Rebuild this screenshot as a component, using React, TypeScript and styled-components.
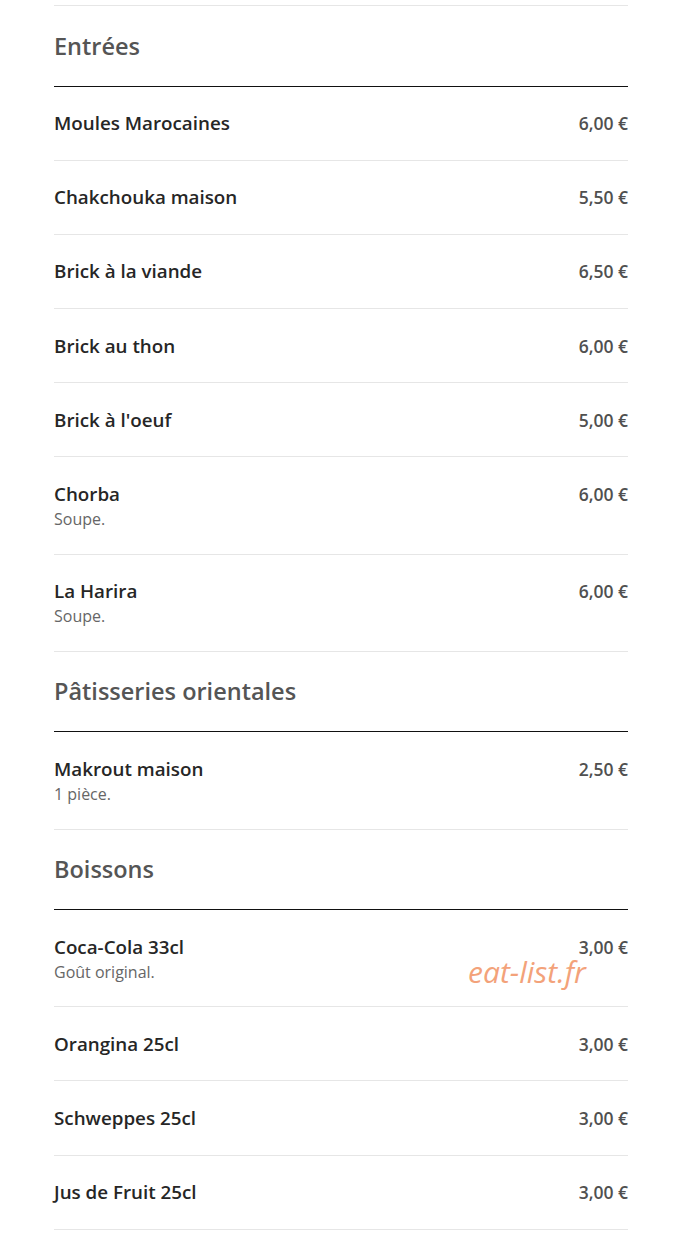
import React from "react";
import styled, { createGlobalStyle } from "styled-components";

const GlobalStyle = createGlobalStyle`
  html, body { margin: 0; padding: 0; background: #fff; }
  body { font-family: "Open Sans", "Liberation Sans", sans-serif; }
`;

const Page = styled.div`
  position: relative;
  padding: 5px 72px 15px 54px;
`;

const TopRule = styled.div`
  border-top: 1px solid #e6e6e6;
`;

const Section = styled.section``;

const Heading = styled.h2`
  margin: 0;
  padding: 24.5px 0 25px;
  font-size: 23.5px;
  line-height: 30px;
  font-weight: 600;
  color: #555;
  border-bottom: 1px solid #111;
`;

const Row = styled.div`
  display: flex;
  justify-content: space-between;
  align-items: flex-start;
  padding: 25.6px 0 25.6px;
  border-bottom: 1px solid #e6e6e6;
`;

const Info = styled.div`
  display: flex;
  flex-direction: column;
`;

const Name = styled.div`
  font-size: 18.8px;
  line-height: 22px;
  font-weight: 600;
  color: #262626;
`;

const Desc = styled.div`
  margin-top: 6px;
  font-size: 16px;
  line-height: 17px;
  color: #666;
`;

const Price = styled.div`
  font-size: 17.5px;
  line-height: 22px;
  font-weight: 600;
  color: #505050;
  white-space: nowrap;
`;

const Watermark = styled.div`
  position: absolute;
  left: 468px;
  top: 950px;
  font-size: 30px;
  line-height: 44px;
  font-style: italic;
  color: #f3a27a;
  pointer-events: none;
`;

type Item = { name: string; price: string; desc?: string };
type Cat = { title: string; items: Item[] };

const data: Cat[] = [
  {
    title: "Entrées",
    items: [
      { name: "Moules Marocaines", price: "6,00 €" },
      { name: "Chakchouka maison", price: "5,50 €" },
      { name: "Brick à la viande", price: "6,50 €" },
      { name: "Brick au thon", price: "6,00 €" },
      { name: "Brick à l'oeuf", price: "5,00 €" },
      { name: "Chorba", price: "6,00 €", desc: "Soupe." },
      { name: "La Harira", price: "6,00 €", desc: "Soupe." },
    ],
  },
  {
    title: "Pâtisseries orientales",
    items: [{ name: "Makrout maison", price: "2,50 €", desc: "1 pièce." }],
  },
  {
    title: "Boissons",
    items: [
      { name: "Coca-Cola 33cl", price: "3,00 €", desc: "Goût original." },
      { name: "Orangina 25cl", price: "3,00 €" },
      { name: "Schweppes 25cl", price: "3,00 €" },
      { name: "Jus de Fruit 25cl", price: "3,00 €" },
    ],
  },
];

export default function App() {
  return (
    <>
      <GlobalStyle />
      <Page>
        <TopRule />
        {data.map((cat) => (
          <Section key={cat.title}>
            <Heading>{cat.title}</Heading>
            {cat.items.map((it) => (
              <Row key={it.name}>
                <Info>
                  <Name>{it.name}</Name>
                  {it.desc && <Desc>{it.desc}</Desc>}
                </Info>
                <Price>{it.price}</Price>
              </Row>
            ))}
          </Section>
        ))}
        <Watermark>eat-list.fr</Watermark>
      </Page>
    </>
  );
}
